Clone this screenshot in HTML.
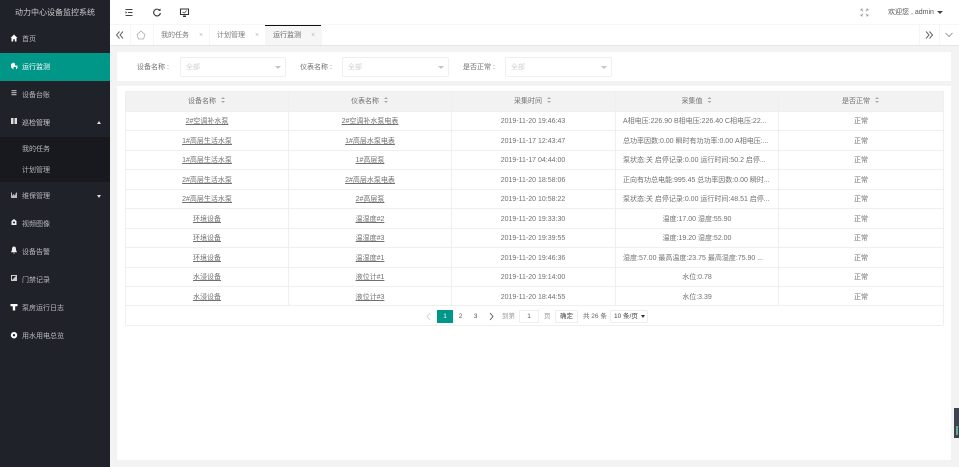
<!DOCTYPE html>
<html lang="zh"><head><meta charset="utf-8"><title>运行监测</title>
<style>
*{box-sizing:border-box;margin:0;padding:0}
html,body{width:959px;height:467px;overflow:hidden;background:#f3f3f4;font-family:"Liberation Sans","Noto Sans CJK SC",sans-serif;font-size:7px;color:#707070}
.a{position:absolute}
.t{position:absolute;white-space:nowrap;line-height:12px;height:12px;margin-top:1px;filter:blur(.2px)}
.side{left:0;top:0;width:110px;height:467px;background:#20222a}
.m{position:absolute;left:22px;color:#b8b9bc;font-size:7px;line-height:12px;white-space:nowrap;margin-top:1px;filter:blur(.2px)}
.ic{position:absolute;left:10px;width:8px;height:8px;margin-top:-1px}
.c{text-align:center;transform:translateX(-50%)}
.line{position:absolute;background:#efefef}
u{text-decoration:underline;text-underline-offset:1px}
.sel{position:absolute;top:57px;height:20px;background:#fff;border:1px solid #efefef;border-radius:2px;color:#cfcfcf;line-height:19px;padding-left:5px}
.sel i{position:absolute;right:4px;top:7.500px;border:3px solid transparent;border-top:3.5px solid #c4c4c4;border-bottom:0}
.pg{position:absolute;top:310px;height:13px;line-height:13px;text-align:center;font-size:6.5px}
.so{display:inline-block;position:relative;width:5px;height:7px;margin-left:5px;vertical-align:-1px}
.so:before{content:"";position:absolute;left:0;top:0;border:2.2px solid transparent;border-bottom:2.4px solid #aaa;border-top:0}
.so:after{content:"";position:absolute;left:0;top:4px;border:2.2px solid transparent;border-top:2.4px solid #aaa;border-bottom:0}
</style></head><body>

<div class="a side"></div>
<div class="t" style="left:15px;top:6px;color:#c9cacc;font-size:8px">动力中心设备监控系统</div>
<div class="a" style="left:0;top:53px;width:110px;height:28px;background:#009688"></div>
<div class="a" style="left:0;top:137px;width:110px;height:45px;background:#17191e"></div>

<svg class="ic" style="top:35px" viewBox="0 0 8 8"><path d="M4 .5 .5 4H1.500V7.500H3.200V5.200H4.800V7.500H6.500V4H7.500Z" fill="#fff"/></svg>
<div class="m" style="top:33px">首页</div>
<svg class="ic" style="top:63px" viewBox="0 0 8 8"><path d="M3.500 .5 1 2v3.500l2.500 2V5H6V7.500L7.500 6V3.500H5V1.500Z" fill="#fff"/></svg>
<div class="m" style="top:61px;color:#fff">运行监测</div>
<svg class="ic" style="top:90px" viewBox="0 0 8 8"><path d="M1.500 1h5v1.200h-5zM1.500 3h5v1.200h-5zM1.500 5h5v1.200h-5z" fill="#aaa"/></svg>
<div class="m" style="top:89px">设备台账</div>
<svg class="ic" style="top:118px" viewBox="0 0 8 8"><path d="M1 1h2.500v6H1zM4.500 1H7v6H4.500z" fill="#ddd"/></svg>
<div class="m" style="top:117px;color:#ccc">巡检管理</div>
<div class="a" style="left:97px;top:121px;border:2.800px solid transparent;border-bottom:3px solid #ddd;border-top:0"></div>
<div class="m" style="top:143px">我的任务</div>
<div class="m" style="top:164px">计划管理</div>
<svg class="ic" style="top:192px" viewBox="0 0 8 8"><path d="M1 7V1.500h1V5L3.500 3 5 4.500 6 1.500h1V7Z" fill="#bbb"/></svg>
<div class="m" style="top:190px">维保管理</div>
<div class="a" style="left:97px;top:195px;border:2.800px solid transparent;border-top:3px solid #ddd;border-bottom:0"></div>
<svg class="ic" style="top:219px" viewBox="0 0 8 8"><path d="M4 1 1.500 3v4h5V3ZM4 3.500a1 1 0 1 1-.01 0Z" fill="#eee" fill-rule="evenodd"/></svg>
<div class="m" style="top:218px">视频图像</div>
<svg class="ic" style="top:247px" viewBox="0 0 8 8"><path d="M4 .5C2.300.5 2 2 2 3.500 2 5 1 5.500 1 6.200H7C7 5.500 6 5 6 3.500 6 2 5.700.5 4 .5ZM3 6.800h2L4 7.800Z" fill="#eee"/></svg>
<div class="m" style="top:246px">设备告警</div>
<svg class="ic" style="top:275px" viewBox="0 0 8 8"><path d="M1 1h6v6H1ZM2 6 6 2H2Z" fill="#ccc" fill-rule="evenodd"/></svg>
<div class="m" style="top:274px">门禁记录</div>
<svg class="ic" style="top:304px" viewBox="0 0 8 8"><path d="M.5 1h7v2.200H5.200V7.500H2.800V3.200H.5Z" fill="#fff"/></svg>
<div class="m" style="top:302px">泵房运行日志</div>
<svg class="ic" style="top:332px" viewBox="0 0 8 8"><path d="M4 1a3.200 3.200 0 1 0 .01 0ZM4 3a1.200 1.200 0 1 1-.01 0Z" fill="#fff" fill-rule="evenodd"/></svg>
<div class="m" style="top:330px">用水用电总览</div>

<!-- top header -->
<div class="a" style="left:110px;top:0;width:849px;height:24px;background:#fff"></div>
<div class="line" style="left:110px;top:24px;width:849px;height:1px;background:#f6f6f6"></div>
<svg class="a" style="left:124px;top:8px" width="10" height="9" viewBox="0 0 10 9"><path d="M1.500 1.500h7M4 4.500h4.500M1.500 7.500h7" stroke="#444" stroke-width="1"/><path d="M1.500 3.200 3.200 4.500 1.500 5.800Z" fill="#444"/></svg>
<svg class="a" style="left:152px;top:8px" width="10" height="9" viewBox="0 0 10 9"><path d="M7.600 2.300A3.400 3.400 0 1 0 8.400 5" fill="none" stroke="#333" stroke-width="1.100"/><path d="M6 2.700 8.500 3V.5Z" fill="#333"/></svg>
<svg class="a" style="left:179px;top:8px" width="11" height="10" viewBox="0 0 11 10"><path d="M1.500 1h8v5.500h-8Z" fill="none" stroke="#333" stroke-width="1.100"/><path d="M3.500 4 5.500 5 7.500 2.500" stroke="#555" fill="none" stroke-width=".8"/><path d="M4 7.500h3V9H4Z" fill="#333"/></svg>
<svg class="a" style="left:860px;top:8px" width="9" height="9" viewBox="0 0 9 9"><path d="M1 1 3.200 3.200M8 1 5.800 3.200M1 8 3.200 5.800M8 8 5.800 5.800M1 1h1.600M1 1v1.600M8 1H6.400M8 1v1.600M1 8h1.600M1 8V6.400M8 8H6.400M8 8V6.400" stroke="#999" stroke-width=".8" fill="none"/></svg>
<div class="t" style="left:888px;top:6px;color:#555;font-size:7px">欢迎您 , admin</div>
<div class="a" style="left:937px;top:11px;border:3px solid transparent;border-top:3px solid #444;border-bottom:0"></div>

<!-- tabs -->
<div class="a" style="left:110px;top:25px;width:849px;height:21px;background:#fff;border-bottom:1px solid #e6e6e6"></div>
<div class="a" style="left:265px;top:25px;width:56px;height:20px;background:#f6f6f6;border-top:1px solid #111"></div>
<div class="line" style="left:130px;top:25px;width:1px;height:20px;background:#f6f6f6"></div>
<div class="line" style="left:153px;top:25px;width:1px;height:20px;background:#f6f6f6"></div>
<div class="line" style="left:209px;top:25px;width:1px;height:20px;background:#f6f6f6"></div>
<div class="line" style="left:321px;top:25px;width:1px;height:20px;background:#f6f6f6"></div>
<div class="line" style="left:919px;top:25px;width:1px;height:20px;background:#f6f6f6"></div>
<div class="line" style="left:939px;top:25px;width:1px;height:20px;background:#f6f6f6"></div>
<svg class="a" style="left:115px;top:30px" width="10" height="10" viewBox="0 0 10 10"><path d="M4.500 1.500 1.500 5 4.500 8.500M8 1.500 5 5 8 8.500" fill="none" stroke="#666" stroke-width="1"/></svg>
<svg class="a" style="left:136px;top:30px" width="10" height="10" viewBox="0 0 10 10"><path d="M5 1 1 4.500 2.500 9h5L9 4.500Z" fill="none" stroke="#aaa" stroke-width=".8"/></svg>
<div class="t" style="left:161px;top:29px;color:#777">我的任务</div>
<div class="t" style="left:199px;top:29px;color:#bbb">×</div>
<div class="t" style="left:217px;top:29px;color:#777">计划管理</div>
<div class="t" style="left:255px;top:29px;color:#bbb">×</div>
<div class="t" style="left:273px;top:29px;color:#666">运行监测</div>
<div class="t" style="left:311px;top:29px;color:#bbb">×</div>
<svg class="a" style="left:924px;top:30px" width="10" height="10" viewBox="0 0 10 10"><path d="M2 1.500 5 5 2 8.500M5.500 1.500 8.500 5 5.500 8.500" fill="none" stroke="#666" stroke-width="1"/></svg>
<svg class="a" style="left:944px;top:31px" width="10" height="8" viewBox="0 0 10 8"><path d="M1.500 2 5 5.500 8.500 2" fill="none" stroke="#888" stroke-width=".8"/></svg>

<!-- filter card -->
<div class="a" style="left:117px;top:52px;width:834px;height:29px;background:#fff"></div>
<div class="t" style="left:137px;top:61px">设备名称 :</div>
<div class="sel" style="left:180px;width:106px">全部<i></i></div>
<div class="t" style="left:300px;top:61px">仪表名称 :</div>
<div class="sel" style="left:342px;width:107px">全部<i></i></div>
<div class="t" style="left:463px;top:61px">是否正常 :</div>
<div class="sel" style="left:505px;width:107px">全部<i></i></div>

<!-- table card -->
<div class="a" style="left:117px;top:86px;width:834px;height:374px;background:#fff"></div>
<div class="a" style="left:125px;top:91px;width:818px;height:20px;background:#f2f2f2"></div>
<div class="line" style="left:125px;top:91px;width:818px;height:1px"></div>
<div class="line" style="left:125px;top:111px;width:818px;height:1px"></div>
<div class="line" style="left:125px;top:130px;width:818px;height:1px"></div>
<div class="line" style="left:125px;top:150px;width:818px;height:1px"></div>
<div class="line" style="left:125px;top:169px;width:818px;height:1px"></div>
<div class="line" style="left:125px;top:189px;width:818px;height:1px"></div>
<div class="line" style="left:125px;top:208px;width:818px;height:1px"></div>
<div class="line" style="left:125px;top:228px;width:818px;height:1px"></div>
<div class="line" style="left:125px;top:247px;width:818px;height:1px"></div>
<div class="line" style="left:125px;top:267px;width:818px;height:1px"></div>
<div class="line" style="left:125px;top:286px;width:818px;height:1px"></div>
<div class="line" style="left:125px;top:305px;width:818px;height:1px"></div>
<div class="line" style="left:125px;top:325px;width:818px;height:1px"></div>
<div class="line" style="left:125px;top:91px;width:1px;height:234px"></div>
<div class="line" style="left:288px;top:91px;width:1px;height:214px"></div>
<div class="line" style="left:451px;top:91px;width:1px;height:214px"></div>
<div class="line" style="left:615px;top:91px;width:1px;height:214px"></div>
<div class="line" style="left:778px;top:91px;width:1px;height:214px"></div>
<div class="line" style="left:943px;top:91px;width:1px;height:234px"></div>

<div class="t c" style="left:207px;top:95px">设备名称<span class="so"></span></div>
<div class="t c" style="left:370px;top:95px">仪表名称<span class="so"></span></div>
<div class="t c" style="left:533px;top:95px">采集时间<span class="so"></span></div>
<div class="t c" style="left:697px;top:95px">采集值<span class="so"></span></div>
<div class="t c" style="left:861px;top:95px">是否正常<span class="so"></span></div>

<div class="t c" style="left:207px;top:115px"><u>2#空调补水泵</u></div><div class="t c" style="left:370px;top:115px"><u>2#空调补水泵电表</u></div><div class="t c" style="left:533px;top:115px">2019-11-20 19:46:43</div><div class="t" style="left:623px;top:115px">A相电压:226.90 B相电压:226.40 C相电压:22...</div><div class="t c" style="left:861px;top:115px">正常</div>
<div class="t c" style="left:207px;top:134.500px"><u>1#高层生活水泵</u></div><div class="t c" style="left:370px;top:134.500px"><u>1#高层水泵电表</u></div><div class="t c" style="left:533px;top:134.500px">2019-11-17 12:43:47</div><div class="t" style="left:623px;top:134.500px">总功率因数:0.00 瞬时有功功率:0.00 A相电压:...</div><div class="t c" style="left:861px;top:134.500px">正常</div>
<div class="t c" style="left:207px;top:154px"><u>1#高层生活水泵</u></div><div class="t c" style="left:370px;top:154px"><u>1#高层泵</u></div><div class="t c" style="left:533px;top:154px">2019-11-17 04:44:00</div><div class="t" style="left:623px;top:154px">泵状态:关 启停记录:0.00 运行时间:50.2 启停...</div><div class="t c" style="left:861px;top:154px">正常</div>
<div class="t c" style="left:207px;top:173.500px"><u>2#高层生活水泵</u></div><div class="t c" style="left:370px;top:173.500px"><u>2#高层水泵电表</u></div><div class="t c" style="left:533px;top:173.500px">2019-11-20 18:58:06</div><div class="t" style="left:623px;top:173.500px">正向有功总电能:995.45 总功率因数:0.00 瞬时...</div><div class="t c" style="left:861px;top:173.500px">正常</div>
<div class="t c" style="left:207px;top:193px"><u>2#高层生活水泵</u></div><div class="t c" style="left:370px;top:193px"><u>2#高层泵</u></div><div class="t c" style="left:533px;top:193px">2019-11-20 10:58:22</div><div class="t" style="left:623px;top:193px">泵状态:关 启停记录:0.00 运行时间:48.51 启停...</div><div class="t c" style="left:861px;top:193px">正常</div>
<div class="t c" style="left:207px;top:212.500px"><u>环境设备</u></div><div class="t c" style="left:370px;top:212.500px"><u>温湿度#2</u></div><div class="t c" style="left:533px;top:212.500px">2019-11-20 19:33:30</div><div class="t c" style="left:697px;top:212.500px">温度:17.00 湿度:55.90</div><div class="t c" style="left:861px;top:212.500px">正常</div>
<div class="t c" style="left:207px;top:232px"><u>环境设备</u></div><div class="t c" style="left:370px;top:232px"><u>温湿度#3</u></div><div class="t c" style="left:533px;top:232px">2019-11-20 19:39:55</div><div class="t c" style="left:697px;top:232px">温度:19.20 湿度:52.00</div><div class="t c" style="left:861px;top:232px">正常</div>
<div class="t c" style="left:207px;top:251.500px"><u>环境设备</u></div><div class="t c" style="left:370px;top:251.500px"><u>温湿度#1</u></div><div class="t c" style="left:533px;top:251.500px">2019-11-20 19:46:36</div><div class="t" style="left:623px;top:251.500px">湿度:57.00 最高温度:23.75 最高湿度:75.90 ...</div><div class="t c" style="left:861px;top:251.500px">正常</div>
<div class="t c" style="left:207px;top:271px"><u>水浸设备</u></div><div class="t c" style="left:370px;top:271px"><u>液位计#1</u></div><div class="t c" style="left:533px;top:271px">2019-11-20 19:14:00</div><div class="t c" style="left:697px;top:271px">水位:0.78</div><div class="t c" style="left:861px;top:271px">正常</div>
<div class="t c" style="left:207px;top:290.500px"><u>水浸设备</u></div><div class="t c" style="left:370px;top:290.500px"><u>液位计#3</u></div><div class="t c" style="left:533px;top:290.500px">2019-11-20 18:44:55</div><div class="t c" style="left:697px;top:290.500px">水位:3.39</div><div class="t c" style="left:861px;top:290.500px">正常</div>

<!-- pagination -->
<svg class="a" style="left:425px;top:312px" width="7" height="9" viewBox="0 0 7 9"><path d="M5 1 2 4.500 5 8" fill="none" stroke="#ccc" stroke-width=".8"/></svg>
<div class="pg" style="left:437px;width:16px;background:#009688;color:#fff">1</div>
<div class="pg" style="left:453px;width:15px;color:#555">2</div>
<div class="pg" style="left:468px;width:15px;color:#555">3</div>
<svg class="a" style="left:488px;top:312px" width="7" height="9" viewBox="0 0 7 9"><path d="M2 1 5 4.500 2 8" fill="none" stroke="#555" stroke-width=".9"/></svg>
<div class="t" style="left:502px;top:310px;color:#999;font-size:6.500px">到第</div>
<div class="pg" style="left:519px;width:20px;border:1px solid #eee;line-height:11px;color:#555">1</div>
<div class="t" style="left:544px;top:310px;color:#999;font-size:6.500px">页</div>
<div class="pg" style="left:555px;width:23px;border:1px solid #eee;line-height:11px;color:#444">确定</div>
<div class="t" style="left:583px;top:310px;color:#666;font-size:6.500px">共 26 条</div>
<div class="pg" style="left:610px;width:38px;border:1px solid #eee;border-radius:2px;line-height:11px;color:#444;text-align:left;padding-left:3px">10 条/页</div>
<div class="a" style="left:641px;top:315px;border:2px solid transparent;border-top:3px solid #333;border-bottom:0"></div>

<!-- right widget -->
<div class="a" style="left:954px;top:408px;width:5px;height:30px;background:#3d4350"></div>
<div class="a" style="left:956px;top:426px;width:2px;height:9px;background:#5fb08f"></div>
</body></html>
